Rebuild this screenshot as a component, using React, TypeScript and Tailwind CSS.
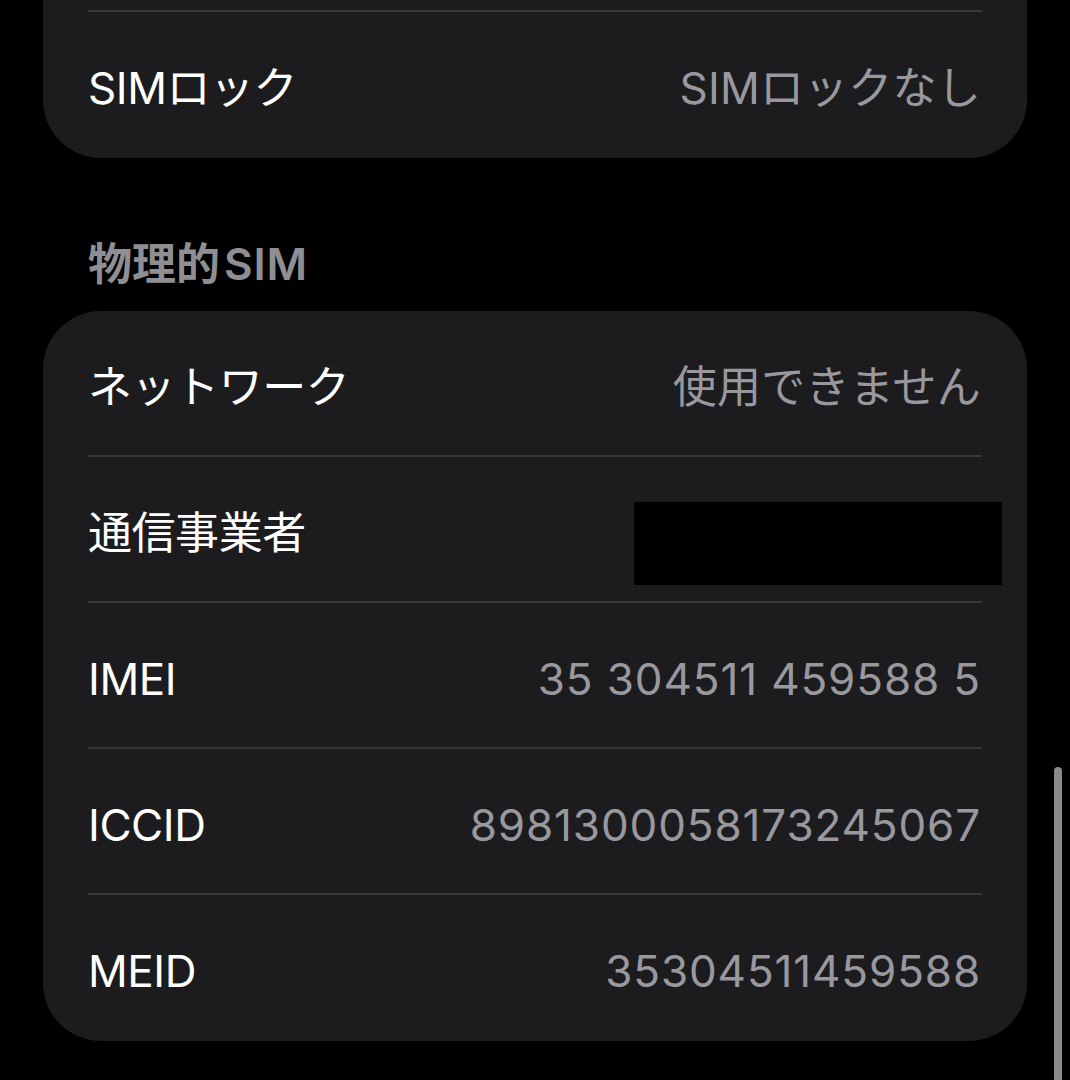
const font = "font-['Inter','Noto_Sans_CJK_JP',sans-serif]";

type Row = { label: string; value?: string; redacted?: boolean };

const physical: Row[] = [
  { label: 'ネットワーク', value: '使用できません' },
  { label: '通信事業者', redacted: true },
  { label: 'IMEI', value: '35 304511 459588 5' },
  { label: 'ICCID', value: '8981300058173245067' },
  { label: 'MEID', value: '35304511459588' },
];

function Divider() {
  return <div className="mx-[45px] h-[2px] bg-[#38383a]" />;
}

function InfoRow({ row }: { row: Row }) {
  const numeric = row.value ? /^[\d ]+$/.test(row.value) : false;
  return (
    <div className="flex h-[144px] items-center justify-between pl-[45px] pr-[46px] pt-[7px]">
      <span className="text-[44px] tracking-[-0.01em] text-white">{row.label}</span>
      {row.redacted ? (
        <div className="mr-[-21px] mt-[21px] h-[83px] w-[368px] bg-black" />
      ) : (
        <span
          className={
            numeric
              ? 'text-[44px] tracking-[0.02em] text-[#98989e]'
              : 'text-[44px] tracking-[0.005em] text-[#98989e]'
          }
        >
          {row.value}
        </span>
      )}
    </div>
  );
}

export default function App() {
  return (
    <div className={`relative h-[1080px] w-[1070px] overflow-hidden bg-black ${font}`}>
      <div className="px-[43px]">
        {/* previous card, only its tail is visible */}
        <div className="rounded-b-[58px] bg-[#1c1c1e] pt-[10px] pb-[2px]">
          <Divider />
          <InfoRow row={{ label: 'SIMロック', value: 'SIMロックなし' }} />
        </div>

        <div className="pl-[45px] pt-[78px] pb-[19px] text-[44px] font-semibold leading-[56px] text-[#8e8e93]">
          物理的<span className="ml-[4px] tracking-[0.02em]">SIM</span>
        </div>

        <div className="rounded-[58px] bg-[#1c1c1e] pb-[2px]">
          {physical.map((row, i) => (
            <div key={row.label}>
              {i > 0 && <Divider />}
              <InfoRow row={row} />
            </div>
          ))}
        </div>
      </div>

      {/* scroll indicator */}
      <div className="absolute left-[1054px] top-[767px] h-[330px] w-[8px] rounded-full bg-[#8a8a8a]" />
    </div>
  );
}
